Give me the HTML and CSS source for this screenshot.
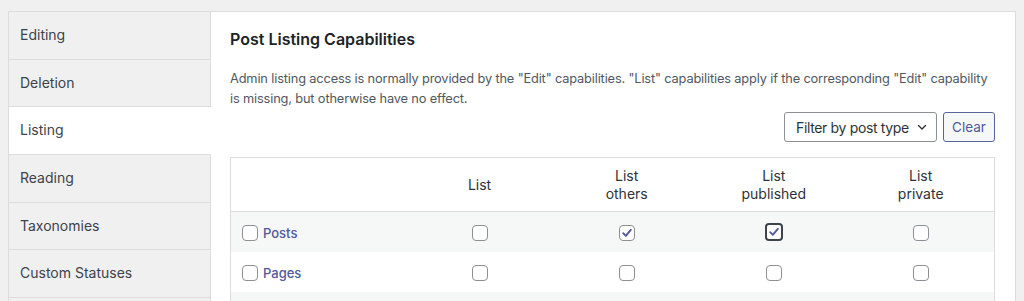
FILE: index.html
```html
<!DOCTYPE html>
<html>
<head>
<meta charset="utf-8">
<link rel="stylesheet" href="styles.css">
</head>
<body>
<div class="wrap">
  <ul class="tabs">
    <li class="tab">Editing</li>
    <li class="tab">Deletion</li>
    <li class="tab active">Listing</li>
    <li class="tab">Reading</li>
    <li class="tab">Taxonomies</li>
    <li class="tab">Custom Statuses</li>
    <li class="tab"></li>
  </ul>
  <div class="panel">
    <h2 class="title">Post Listing Capabilities</h2>
    <p class="desc">Admin listing access is normally provided by the "Edit" capabilities. "List" capabilities apply if the corresponding "Edit" capability is missing, but otherwise have no effect.</p>
    <div class="filters">
      <div class="select"><span class="select-label">Filter by post type</span>
        <svg class="chev" width="12" height="12" viewBox="0 0 12 12"><path d="M2.5 4.5 L6 8 L9.5 4.5" fill="none" stroke="#2c3338" stroke-width="1.4" stroke-linecap="round" stroke-linejoin="round"/></svg>
      </div>
      <button class="btn">Clear</button>
    </div>
    <table class="caps">
      <thead>
        <tr>
          <th class="first"></th>
          <th>List</th>
          <th>List<br>others</th>
          <th>List<br>published</th>
          <th>List<br>private</th>
        </tr>
      </thead>
      <tbody>
        <tr class="alt">
          <td class="first"><span class="cb"></span><a class="link">Posts</a></td>
          <td><span class="cb"></span></td>
          <td><span class="cb checked"><svg width="14" height="14" viewBox="0 0 14 14"><path d="M3.2 7.2 L5.8 9.8 L10.8 3.8" fill="none" stroke="#50599b" stroke-width="1.9" stroke-linecap="round" stroke-linejoin="round"/></svg></span></td>
          <td><span class="cb checked focus"><svg width="14" height="14" viewBox="0 0 14 14"><path d="M3.2 7.2 L5.8 9.8 L10.8 3.8" fill="none" stroke="#50599b" stroke-width="1.9" stroke-linecap="round" stroke-linejoin="round"/></svg></span></td>
          <td><span class="cb"></span></td>
        </tr>
        <tr>
          <td class="first"><span class="cb"></span><a class="link">Pages</a></td>
          <td><span class="cb"></span></td>
          <td><span class="cb"></span></td>
          <td><span class="cb"></span></td>
          <td><span class="cb"></span></td>
        </tr>
        <tr class="alt">
          <td class="first"></td>
          <td></td>
          <td></td>
          <td></td>
          <td></td>
        </tr>
      </tbody>
    </table>
  </div>
</div>
</body>
</html>
```

FILE: styles.css
```css
html, body {
  margin: 0;
  padding: 0;
  background: #f0f0f1;
  font-family: Inter, "Noto Sans", sans-serif;
  color: #3c434a;
  font-size: 13px;
}
.wrap {
  display: flex;
  align-items: flex-start;
  margin: 11px 8px 0 8px;
}
.tabs {
  list-style: none;
  margin: 0;
  padding: 0;
  width: 202px;
  flex: none;
  border-top: 1px solid #dcdcde;
  border-left: 1px solid #dcdcde;
}
.tab {
  height: 46.7px;
  line-height: 46.7px;
  padding-left: 11px;
  font-size: 14px;
  color: #3c434a;
  background: #f0f0f1;
  border-bottom: 1px solid #dcdcde;
  border-right: 1px solid #dcdcde;
}
.tab.active {
  background: #fff;
  border-right-color: #fff;
}
.panel {
  flex: 1;
  background: #fff;
  border-top: 1px solid #dcdcde;
  border-right: 1px solid #dcdcde;
  padding: 15px 20px 20px 19px;
  min-height: 300px;
}
.title {
  margin: 0;
  font-size: 16px;
  font-weight: 600;
  line-height: 24px;
  color: #1d2327;
}
.desc {
  margin: 18px 0 0 0;
  line-height: 20px;
  color: #50575e;
  font-size: 12.8px;
  letter-spacing: -0.15px;
}
.filters {
  display: flex;
  justify-content: flex-end;
  gap: 6px;
  margin-top: 3px;
}
.select {
  box-sizing: border-box;
  width: 153px;
  height: 30px;
  border: 1px solid #8c8f94;
  border-radius: 3px;
  display: flex;
  align-items: center;
  padding-left: 11px;
  font-size: 14px;
  color: #2c3338;
}
.select-label {
  letter-spacing: -0.35px;
}
.chev {
  margin-left: auto;
  margin-right: 8px;
}
.btn {
  box-sizing: border-box;
  height: 30px;
  width: 52px;
  border: 1px solid #5b639f;
  border-radius: 3px;
  background: #f6f7f7;
  color: #50599b;
  font-family: inherit;
  font-size: 13.5px;
  padding: 0;
}
.caps {
  margin-top: 15px;
  width: 100%;
  border-collapse: collapse;
  border: 1px solid #dcdcde;
  table-layout: fixed;
}
.caps th {
  font-weight: 400;
  font-size: 14px;
  color: #2c3338;
  line-height: 18px;
  height: 53px;
  padding: 0;
  border-bottom: 1px solid #dcdcde;
  text-align: center;
  vertical-align: middle;
}
.caps th.first, .caps td.first {
  width: 175px;
}
.caps td {
  height: 40px;
  padding: 0;
  text-align: center;
  vertical-align: middle;
}
.caps td.first {
  text-align: left;
  padding-left: 11px;
}
.caps tr.alt td {
  background: #f6f7f7;
}
.cb {
  box-sizing: border-box;
  display: inline-flex;
  align-items: center;
  justify-content: center;
  width: 16px;
  height: 16px;
  border: 1px solid #8c8f94;
  border-radius: 4px;
  background: #fff;
  vertical-align: middle;
}
.cb.focus {
  border: 2px solid #3c434a;
  width: 18px;
  height: 18px;
}
.link {
  color: #50599b;
  font-size: 13px;
  font-weight: 500;
  margin-left: 5px;
  vertical-align: middle;
}
```
